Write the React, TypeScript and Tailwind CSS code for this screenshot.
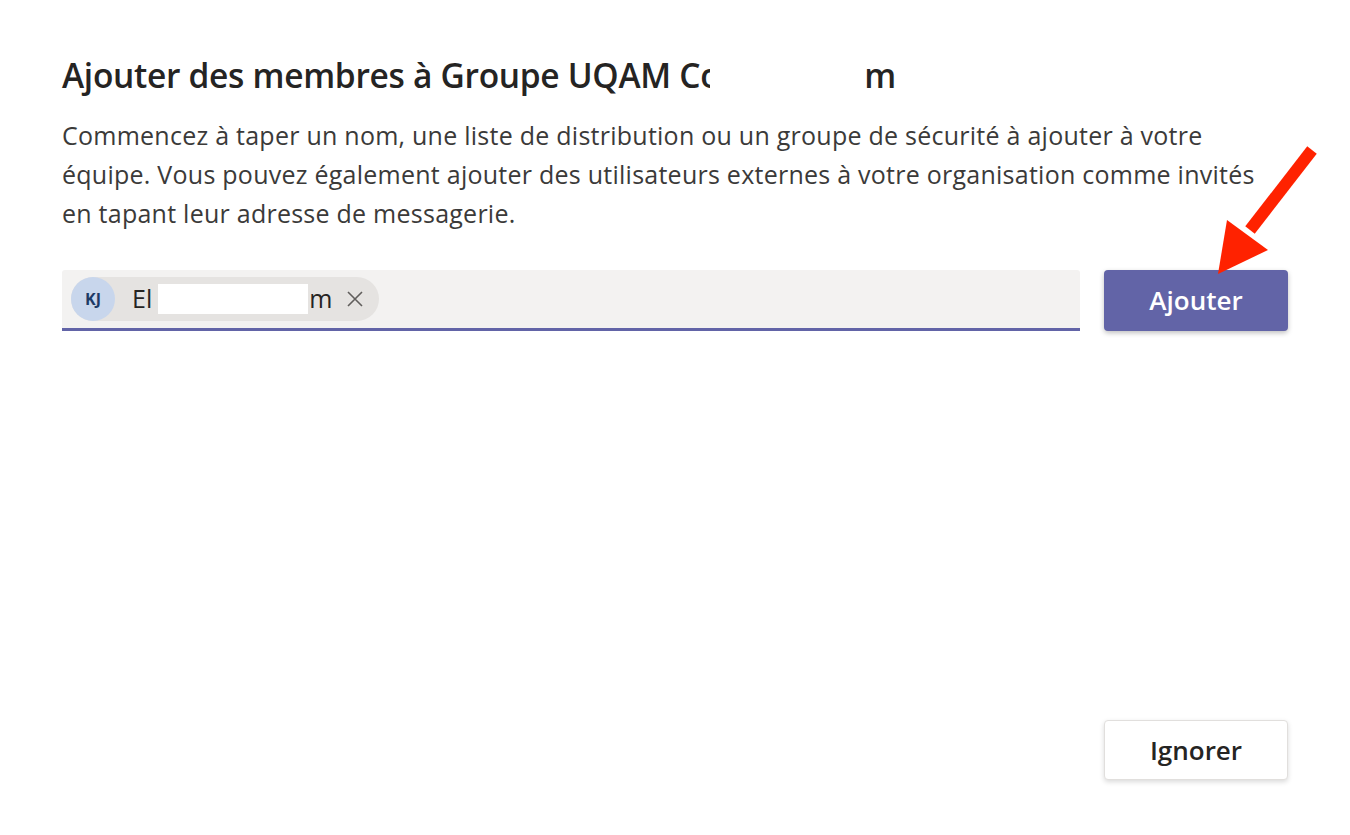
export default function App() {
  return (
    <div className="relative w-[1350px] h-[835px] bg-white overflow-hidden text-[#252423]" style={{ fontFamily: '"Open Sans", "Noto Sans", sans-serif' }}>
      <div className="flex flex-col h-full px-[62px] pt-[50px] pb-[55px]">
        <h1 className="flex items-center text-[33.5px] leading-[50px] font-semibold tracking-[-0.3px]">
          <span>Ajouter des membres à Groupe UQAM Co</span>
          <span className="inline-block w-[154px] h-[46px] bg-white -ml-[10px]" />
          <span>m</span>
        </h1>
        <p className="mt-[16px] text-[25px] leading-[39px] text-[#3b3a39] whitespace-nowrap tracking-[0.25px]">
          Commencez à taper un nom, une liste de distribution ou un groupe de sécurité à ajouter à votre
          <br />
          équipe. Vous pouvez également ajouter des utilisateurs externes à votre organisation comme invités
          <br />
          en tapant leur adresse de messagerie.
        </p>
        <div className="mt-[37px] flex items-start gap-[24px]">
          <div className="flex-1 h-[61px] bg-[#f3f2f1] border-b-[3px] border-[#6264a7] rounded-t-[3px] flex items-center px-[9px]">
            <div className="flex items-center h-[44px] bg-[#e5e3e1] rounded-full pr-[16px]">
              <div className="w-[44px] h-[44px] rounded-full bg-[#c8d6ec] flex items-center justify-center text-[16px] font-bold text-[#1e3a66]">
                KJ
              </div>
              <span className="ml-[17px] text-[25px] text-[#252423]">El</span>
              <span className="inline-block w-[150px] h-[30px] bg-white ml-[6px]" />
              <span className="text-[25px] text-[#252423] ml-[1px]">m</span>
              <svg className="ml-[15px]" width="16" height="16" viewBox="0 0 16 16">
                <path d="M1 1 L15 15 M15 1 L1 15" stroke="#605e5c" strokeWidth="1.6" />
              </svg>
            </div>
          </div>
          <button className="w-[184px] h-[61px] rounded-[4px] bg-[#6264a7] text-white text-[26px] font-semibold shadow-[0_2px_5px_rgba(0,0,0,0.25)]">
            Ajouter
          </button>
        </div>
        <div className="mt-auto flex justify-end">
          <button className="w-[184px] h-[60px] rounded-[4px] bg-white border border-[#e1dfdd] text-[26px] font-semibold text-[#252423] shadow-[0_2px_5px_rgba(0,0,0,0.15)]">
            Ignorer
          </button>
        </div>
      </div>
      <svg className="absolute left-0 top-0 pointer-events-none" width="1350" height="835">
        <line x1="1312" y1="150" x2="1250" y2="230" stroke="#ff2200" strokeWidth="12" />
        <polygon points="1218,274 1227,220 1268,250" fill="#ff2200" />
      </svg>
    </div>
  );
}
